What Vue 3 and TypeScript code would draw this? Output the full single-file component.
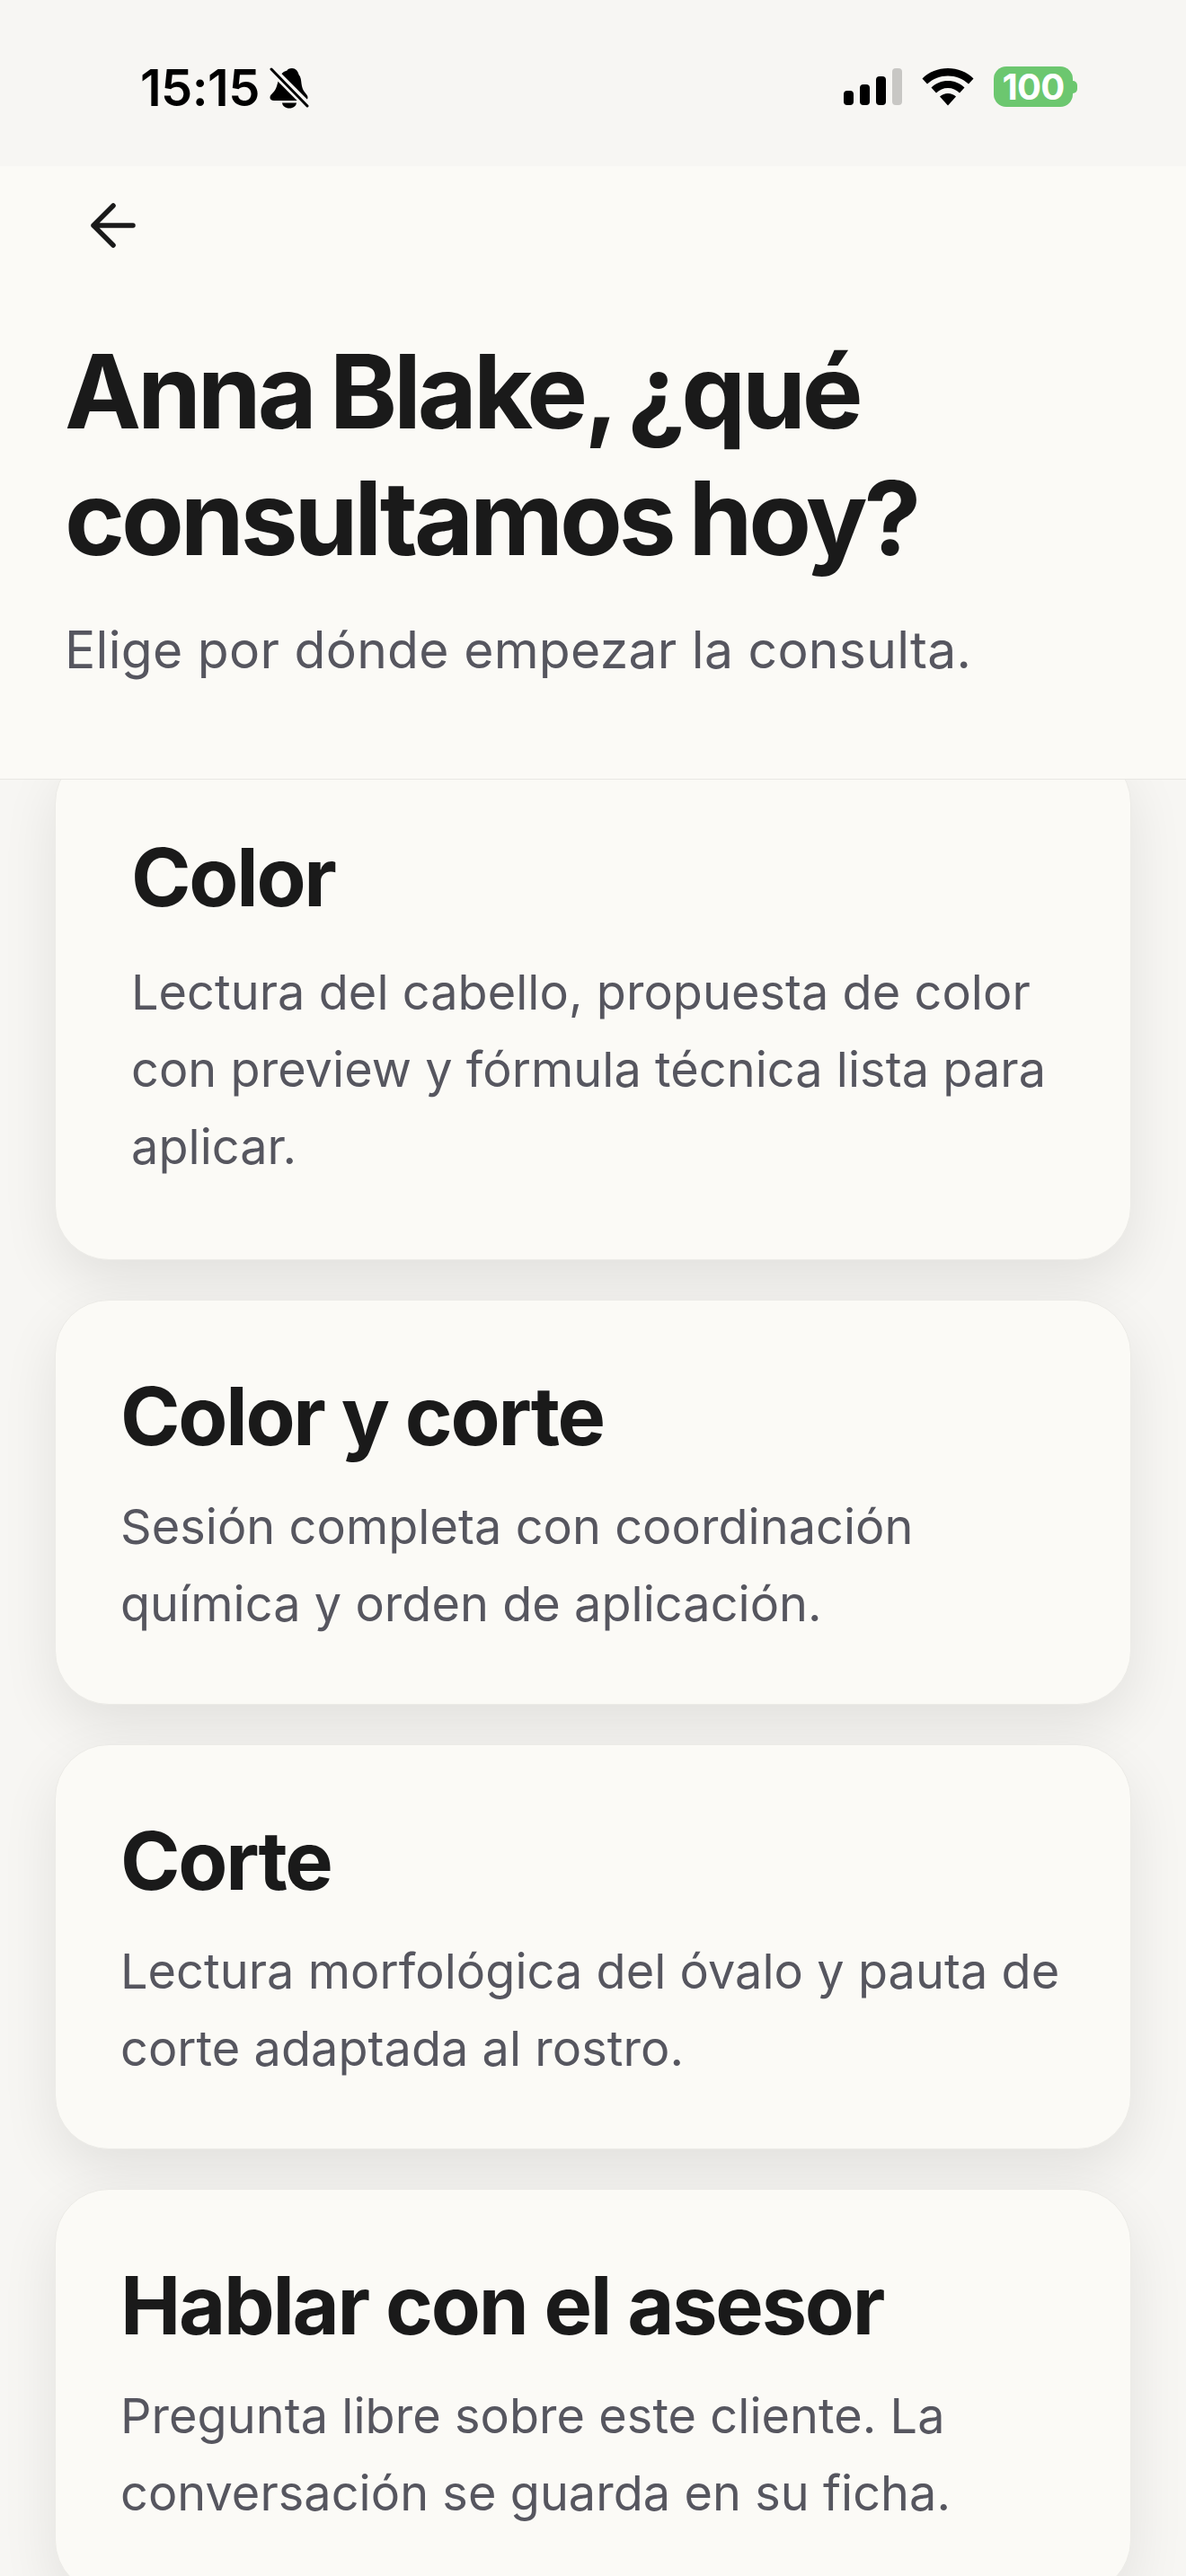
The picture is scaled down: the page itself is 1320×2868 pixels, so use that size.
<script setup lang="ts">
interface Option {
  title: string
  text: string
}

const first: Option = {
  title: 'Color',
  text: 'Lectura del cabello, propuesta de color con preview y fórmula técnica lista para aplicar.',
}

const options: Option[] = [
  { title: 'Color y corte', text: 'Sesión completa con coordinación química y orden de aplicación.' },
  { title: 'Corte', text: 'Lectura morfológica del óvalo y pauta de corte adaptada al rostro.' },
  { title: 'Hablar con el asesor', text: 'Pregunta libre sobre este cliente. La conversación se guarda en su ficha.' },
]
</script>

<template>
  <div class="screen">
    <div class="status-bar">
      <div class="status-left">
        <span class="time">15:15</span>
        <svg class="bell" width="44" height="46" viewBox="0 0 44 46">
          <path d="M25 1c4 0 6.500 3 7.500 7 2.500 3 2.500 6 3 10 .5 4 1.500 7 3.500 9.500 2 2.500 3.500 4 3.500 6 0 2-1.500 3.500-4 3.500H5c-3 0-4.500-1.500-4.500-3.500 0-2 1.500-3.500 3-5 2-2 3.500-4 4.500-7.500l2-7c1-5 4-9 9.500-10.500C20 2 22 1 25 1z" fill="#000" />
          <path d="M14 39.500h16c-.5 3.500-3.500 6-8 6s-7.500-2.500-8-6z" fill="#000" />
          <path d="M2 2l40 40" stroke="#f7f6f3" stroke-width="9" />
          <path d="M2 2l40 41" stroke="#000" stroke-width="3" stroke-linecap="round" />
        </svg>
      </div>
      <div class="status-right">
        <div class="signal">
          <i class="b1"></i><i class="b2"></i><i class="b3"></i><i class="b4"></i>
        </div>
        <svg class="wifi" width="58" height="42" viewBox="0 0 58 42">
          <path d="M29 0c11 0 21 4 28.500 11.500L52 17.500C45.500 11.500 37.500 8.500 29 8.500S12.500 11.500 6 17.500L.5 11.500C8 4 18 0 29 0z" fill="#000" />
          <path d="M29 14c7 0 13.500 2.500 18.500 7.500L42 27.500c-3.500-3.500-8-5.500-13-5.500s-9.500 2-13 5.500l-5.500-6C15.500 16.500 22 14 29 14z" fill="#000" />
          <path d="M29 28c3.500 0 6.500 1.300 9 3.500L29 41.500 20 31.500c2.500-2.200 5.500-3.500 9-3.500z" fill="#000" />
        </svg>
        <div class="battery">
          <span class="level">100</span>
          <span class="cap"></span>
        </div>
      </div>
    </div>

    <header class="header">
      <svg class="back" width="52" height="50" viewBox="0 0 52 50" fill="none">
        <path d="M48 25H4M26 3 4 25l22 22" stroke="#1a1a1a" stroke-width="5.500" stroke-linecap="round" stroke-linejoin="round" />
      </svg>
      <h1>Anna Blake, ¿qué<br />consultamos hoy?</h1>
      <p>Elige por dónde empezar la consulta.</p>
    </header>

    <main class="list">
      <section class="card first">
        <h2>{{ first.title }}</h2>
        <p>{{ first.text }}</p>
      </section>
      <section v-for="o in options" :key="o.title" class="card">
        <h2>{{ o.title }}</h2>
        <p>{{ o.text }}</p>
      </section>
    </main>
  </div>
</template>

<style>
html,
body {
  margin: 0;
  background: #f7f6f3;
}
</style>

<style scoped>
.screen {
  width: 1320px;
  height: 2868px;
  overflow: hidden;
  background: #f7f6f3;
  font-family: Inter, "Noto Sans", sans-serif;
  display: flex;
  flex-direction: column;
}

.status-bar {
  height: 185px;
  flex-shrink: 0;
  box-sizing: border-box;
  padding: 66px 121px 0 156px;
  display: flex;
  justify-content: space-between;
  align-items: flex-start;
}

.status-left {
  display: flex;
  align-items: center;
  gap: 11px;
}

.time {
  font-size: 56px;
  line-height: 64px;
  font-weight: 600;
  letter-spacing: -0.01em;
  color: #000;
}

.status-right {
  display: flex;
  align-items: center;
  gap: 22px;
  padding-top: 8px;
}

.signal {
  display: flex;
  align-items: flex-end;
  gap: 7px;
  height: 41px;
}

.signal i {
  width: 11px;
  background: #000;
  border-radius: 4px;
}

.signal .b1 {
  height: 16px;
}

.signal .b2 {
  height: 23px;
}

.signal .b3 {
  height: 32px;
}

.signal .b4 {
  height: 41px;
  background: #c8c7c4;
}

.battery {
  display: flex;
  align-items: center;
}

.level {
  width: 88px;
  height: 45px;
  border-radius: 14px;
  background: #6cc76f;
  color: #fff;
  font-size: 40px;
  font-weight: 700;
  line-height: 45px;
  text-align: center;
  letter-spacing: -0.02em;
}

.cap {
  width: 5px;
  height: 14px;
  background: #6cc76f;
  border-radius: 0 5px 5px 0;
}

.header {
  height: 683px;
  flex-shrink: 0;
  box-sizing: border-box;
  padding: 41px 72px 0;
  background: #fbfaf6;
  border-bottom: 1px solid #e8e7e3;
  position: relative;
  z-index: 2;
}

.back {
  display: block;
  margin-left: 28px;
}

.header h1 {
  margin: 89px 0 0;
  font-size: 114px;
  line-height: 141px;
  font-weight: 700;
  letter-spacing: -0.036em;
  word-spacing: -5px;
  color: #1a1a1a;
}

.header p {
  margin: 34px 0 0;
  font-size: 57px;
  line-height: 86px;
  letter-spacing: 0.005em;
  color: #56565f;
}

.list {
  margin: -34px 61px 0;
  display: flex;
  flex-direction: column;
  gap: 44px;
  isolation: isolate;
}

.card {
  box-sizing: border-box;
  height: 451px;
  padding: 75px 72px 0;
  background: #fbfaf6;
  border: 1px solid #ecebe7;
  border-radius: 60px;
  flex-shrink: 0;
  position: relative;
}

/* shadow sits under every card so it never darkens the card above */
.card::before {
  content: "";
  position: absolute;
  inset: 0;
  border-radius: 60px;
  box-shadow: 0 24px 64px rgba(0, 0, 0, 0.09);
  z-index: -1;
}

.card.first {
  height: 569px;
  padding: 88px 84px 0;
}

.card h2 {
  margin: 0;
  font-size: 90px;
  line-height: 108px;
  font-weight: 700;
  letter-spacing: -0.025em;
  color: #1a1a1a;
}

.card p {
  margin: 26px 0 0;
  font-size: 54px;
  line-height: 86px;
  letter-spacing: 0.001em;
  color: #56565f;
}

.card.first p {
  margin-top: 31px;
}
</style>
